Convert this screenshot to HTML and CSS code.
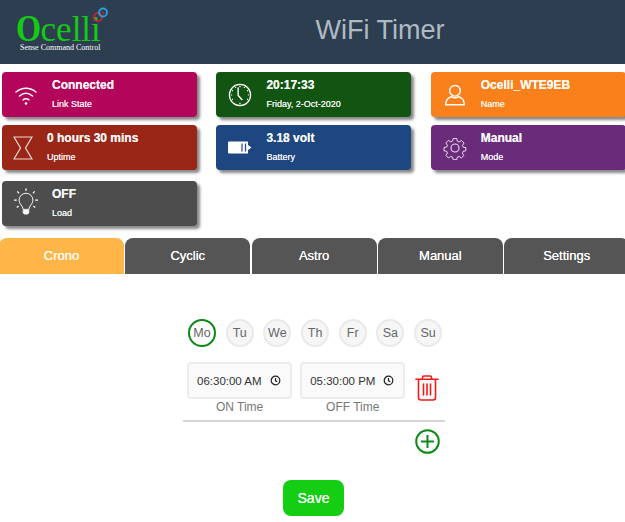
FILE: index.html
```html
<!DOCTYPE html>
<html lang="en">
<head>
<meta charset="utf-8">
<title>WiFi Timer</title>
<link rel="stylesheet" href="styles.css">
</head>
<body>
<header class="header">
  <div class="logo">
    <div class="logo-word"><span class="logo-o">O</span><span class="logo-rest">celli</span></div>
    <div class="logo-tag">Sense Command Control</div>
    <svg class="logo-rings" width="20" height="20" viewBox="0 0 20 20"><circle cx="7" cy="11" r="4" fill="none" stroke="#e0202f" stroke-width="1.6"/><circle cx="12" cy="6.5" r="4" fill="none" stroke="#2e9fd8" stroke-width="1.8"/><path d="M10.5 5l3 3" stroke="#d03040" stroke-width="1"/></svg>
  </div>
  <h1 class="title">WiFi Timer</h1>
</header>

<section class="cards">
  <div class="card c-crimson">
    <svg class="icon" width="24" height="24" viewBox="0 0 24 24" fill="none" stroke="#fff" stroke-width="1.5" stroke-linecap="round"><path d="M2 9c6-5 14-5 20 0"/><path d="M5.500 13c4-3.300 9-3.300 13 0"/><path d="M9 16.800c2-1.500 4-1.500 6 0"/><circle cx="12" cy="20.500" r="1.300" fill="#fff" stroke="none"/></svg>
    <div class="card-text"><div class="card-main">Connected</div><div class="card-sub">Link State</div></div>
  </div>
  <div class="card c-green">
    <svg class="icon" width="26" height="26" viewBox="0 0 26 26" fill="none" stroke="#fff" stroke-width="1.3"><circle cx="13" cy="13" r="11.500"/><path d="M11 5v8.500l4.500 5" stroke-width="1.500"/><path d="M13 3v1.500M13 21.500V23M3 13h1.500M21.500 13H23M8 4.300l.6 1M18 4.300l-.6 1M4.300 18l1-.6M21.700 18l-1-.6M4.300 8l1 .6M21.700 8l-1 .6"/></svg>
    <div class="card-text"><div class="card-main">20:17:33</div><div class="card-sub">Friday, 2-Oct-2020</div></div>
  </div>
  <div class="card c-orange">
    <svg class="icon icon-person" width="24" height="22" viewBox="0 0 24 26" fill="none" stroke="#fff" stroke-width="1.700"><circle cx="12" cy="8" r="6.300"/><path d="M1 24.500c0-5.500 4-8.500 6.500-9.500 2.500 1.500 6.500 1.500 9 0 2.500 1 6.500 4 6.500 9.500z"/></svg>
    <div class="card-text"><div class="card-main">Ocelli_WTE9EB</div><div class="card-sub">Name</div></div>
  </div>
  <div class="card c-red">
    <svg class="icon icon-tight" width="20" height="24" viewBox="0 0 20 24" fill="none" stroke="#f1d8d4" stroke-width="1.200"><path d="M1 1h18l-6.500 11L19 23H1l6.500-11z"/></svg>
    <div class="card-text"><div class="card-main">0 hours 30 mins</div><div class="card-sub">Uptime</div></div>
  </div>
  <div class="card c-blue">
    <svg class="icon" width="24" height="13" viewBox="0 0 24 13"><path d="M0 1.500a1 1 0 0 1 1-1h19v3.500l3.500 2.500-3.500 2.500v3.500H1a1 1 0 0 1-1-1z" fill="#fff"/><path d="M14 2.500v8M17.500 2.500v8" stroke="#1e4680" stroke-width="1.200"/></svg>
    <div class="card-text"><div class="card-main">3.18 volt</div><div class="card-sub">Battery</div></div>
  </div>
  <div class="card c-purple">
    <svg class="icon" width="24" height="24" viewBox="0 0 24 24" fill="none" stroke="#eadcf0" stroke-width="1.100" stroke-linejoin="round"><circle cx="12" cy="12" r="4"/><path d="M10 1.500h4l.6 3 2 .9 2.600-1.700 2.800 2.800-1.700 2.600.9 2 3 .6v0h-.2v3.400l-3 .6-.8 2 1.700 2.600-2.800 2.800-2.600-1.700-2 .8-.6 2.800h-4l-.6-2.800-2-.8-2.600 1.700-2.800-2.800 1.700-2.600-.8-2-3-.6v-3.600l3-.6.8-2-1.700-2.600 2.800-2.800 2.600 1.700 2-.9z" transform="translate(1.200 1.200) scale(.9)"/></svg>
    <div class="card-text"><div class="card-main">Manual</div><div class="card-sub">Mode</div></div>
  </div>
  <div class="card c-grey card-load">
    <svg class="icon icon-bulb" width="26" height="30" viewBox="0 0 26 30" fill="none" stroke="#fff" stroke-width="1"><path d="M9.800 23c0-4-4.300-5.500-4.300-10a7.500 7.500 0 0 1 15 0c0 4.500-4.300 6-4.300 10z"/><path d="M10 24h6v2.500l-1 1.500h-4l-1-1.500z" fill="#fff"/><path d="M13 0v3M3.500 3.500l2 2M22.500 3.500l-2 2M0 13h3M23 13h3M3 21l2-1.600M23 21l-2-1.600" stroke-width="1.300"/></svg>
    <div class="card-text"><div class="card-main">OFF</div><div class="card-sub">Load</div></div>
  </div>
</section>

<nav class="tabs">
  <div class="tab tab-active">Crono</div>
  <div class="tab">Cyclic</div>
  <div class="tab">Astro</div>
  <div class="tab">Manual</div>
  <div class="tab">Settings</div>
</nav>

<main class="panel">
  <div class="days">
    <span class="day day-on">Mo</span>
    <span class="day">Tu</span>
    <span class="day">We</span>
    <span class="day">Th</span>
    <span class="day">Fr</span>
    <span class="day">Sa</span>
    <span class="day">Su</span>
  </div>

  <div class="times">
    <div class="time-field">
      <div class="time-box"><span>06:30:00 AM</span>
        <svg width="11" height="11" viewBox="0 0 11 11" fill="none" stroke="#222" stroke-width="1.200"><circle cx="5.500" cy="5.500" r="4.300"/><path d="M5.500 3v2.800l1.800 1"/></svg>
      </div>
      <div class="time-label">ON Time</div>
    </div>
    <div class="time-field">
      <div class="time-box"><span>05:30:00 PM</span>
        <svg width="11" height="11" viewBox="0 0 11 11" fill="none" stroke="#222" stroke-width="1.200"><circle cx="5.500" cy="5.500" r="4.300"/><path d="M5.500 3v2.800l1.800 1"/></svg>
      </div>
      <div class="time-label">OFF Time</div>
    </div>
    <svg class="trash" width="24" height="26" viewBox="0 0 24 26" fill="none" stroke="#f51a1a" stroke-width="1.600" stroke-linecap="round"><path d="M0.900 4.300h22.200"/><path d="M7.500 4V2.300Q7.500 1 9 1h6q1.500 0 1.500 1.300V4"/><path d="M3.500 4.500v18q0 2.500 2.500 2.500h12q2.500 0 2.500-2.500v-18"/><path d="M8.500 9v11M12 9v11M15.500 9v11"/></svg>
  </div>

  <div class="rule"></div>

  <div class="add-row">
    <svg width="25" height="25" viewBox="0 0 25 25" fill="none" stroke="#0d8a17" stroke-width="2"><circle cx="12.500" cy="12.500" r="11.300"/><path d="M6 12.500h13M12.500 6v13"/></svg>
  </div>

  <div class="save-row"><button class="save">Save</button></div>
</main>
</body>
</html>
```

FILE: styles.css
```css
* { box-sizing: border-box; }

html, body {
  margin: 0;
  height: 522px;
  overflow: hidden;
  background: #fff;
  font-family: "Liberation Sans", Arial, sans-serif;
}

.header {
  display: flex;
  align-items: center;
  height: 64px;
  background: #2c3e50;
}

.logo {
  position: relative;
  width: 135px;
  height: 64px;
  padding: 13px 0 0 15.500px;
  flex: none;
}

.logo-word {
  font-family: "Liberation Serif", serif;
  color: #15c915;
  line-height: 30px;
  height: 30px;
  white-space: nowrap;
}

.logo-o {
  display: inline-block;
  font-size: 38px;
  font-weight: 700;
  margin-right: -4.500px;
  transform: scaleX(.85);
  transform-origin: left center;
}

.logo-rest { font-size: 35px; }

.logo-tag {
  font-family: "Liberation Serif", serif;
  font-size: 8px;
  line-height: 9px;
  color: #fff;
  margin-left: 4.500px;
  white-space: nowrap;
}

.logo-rings {
  position: absolute;
  left: 91px;
  top: 6px;
}

.title {
  flex: 1;
  margin: -4px 0 0;
  text-align: center;
  font-size: 27px;
  font-weight: 400;
  color: #b0bac3;
}

.cards {
  display: grid;
  grid-template-columns: repeat(3, 195px);
  grid-auto-rows: 45px;
  column-gap: 19.400px;
  row-gap: 8px;
  padding: 8px 0 0 2px;
}

.card {
  display: flex;
  align-items: center;
  border-radius: 4px;
  color: #fff;
  box-shadow: 3px 3px 3px #888;
  padding-left: 12px;
}

.card-load { margin-top: 3px; margin-bottom: -3px; }

.icon { flex: none; margin-right: 14px; }
.card .icon { width: 24px; }
.card .icon-tight { width: 20px; margin-left: -1px; margin-right: 14px; }
.card .icon-bulb { margin-top: -3px; }

.card-text { align-self: flex-start; padding-top: 4px; white-space: nowrap; }
.card-main { font-size: 12px; font-weight: 700; line-height: 19px; text-shadow: 0 0 .4px #fff; opacity: .95; }
.card-sub { font-size: 9px; line-height: 12px; margin-top: 3px; text-shadow: 0 0 .5px #fff; opacity: .95; }

.c-crimson { background: #b3055a; }
.c-green { background: #125512; }
.c-orange { background: #f9801a; }
.c-red { background: #9a2617; }
.c-blue { background: #1e4680; }
.c-purple { background: #6a2c7a; }
.c-grey { background: #4d4d4d; }

.tabs {
  display: grid;
  grid-template-columns: repeat(5, 125px);
  column-gap: 1.300px;
  margin: 15px 0 0 -1px;
  height: 36px;
}

.tab {
  display: flex;
  align-items: center;
  justify-content: center;
  padding-bottom: 2px;
  background: #555;
  color: #fff;
  font-size: 13px;
  border-radius: 8px 8px 0 0;
  text-shadow: 0 0 .5px #fff;
}

.tab-active { background: #ffb547; }

.panel {
  display: flex;
  flex-direction: column;
  align-items: flex-start;
  padding: 45px 0 0 183px;
}

.days {
  display: flex;
  gap: 9.700px;
  margin-left: 5px;
}

.day {
  display: flex;
  align-items: center;
  justify-content: center;
  width: 28px;
  height: 28px;
  border-radius: 50%;
  background: #f6f6f6;
  border: 2px solid #e9e9e9;
  color: #666;
  font-size: 12.500px;
}

.day-on {
  background: #fff;
  border-color: #0d8a17;
}

.times {
  display: flex;
  align-items: flex-start;
  margin: 15px 0 0 4px;
  gap: 8px;
}

.time-field { width: 105.200px; }

.time-box {
  display: flex;
  align-items: center;
  justify-content: space-between;
  height: 37px;
  padding: 0 9.500px 0 8px;
  background: #fafafa;
  border: 2px solid #ececec;
  border-radius: 4px;
  color: #333;
  font-size: 11.500px;
}

.time-label {
  text-align: center;
  font-size: 12px;
  line-height: 14px;
  margin-top: 1px;
  color: #777;
}

.trash { margin: 13px 0 0 1.500px; }

.rule {
  width: 262px;
  height: 1.500px;
  margin-top: 6px;
  background: #d4d4d4;
}

.add-row {
  display: flex;
  justify-content: flex-end;
  width: 257px;
  margin-top: 7px;
}

.save-row {
  display: flex;
  width: 100%;
  margin-top: 26px;
}

.save {
  margin-left: 100px;
  width: 61px;
  height: 36px;
  border: 0;
  border-radius: 8px;
  background: #14ce14;
  color: #fff;
  font-family: "Liberation Sans", Arial, sans-serif;
  font-size: 14px;
  font-weight: 400;
  text-shadow: 0 0 .5px #fff;
}
```
